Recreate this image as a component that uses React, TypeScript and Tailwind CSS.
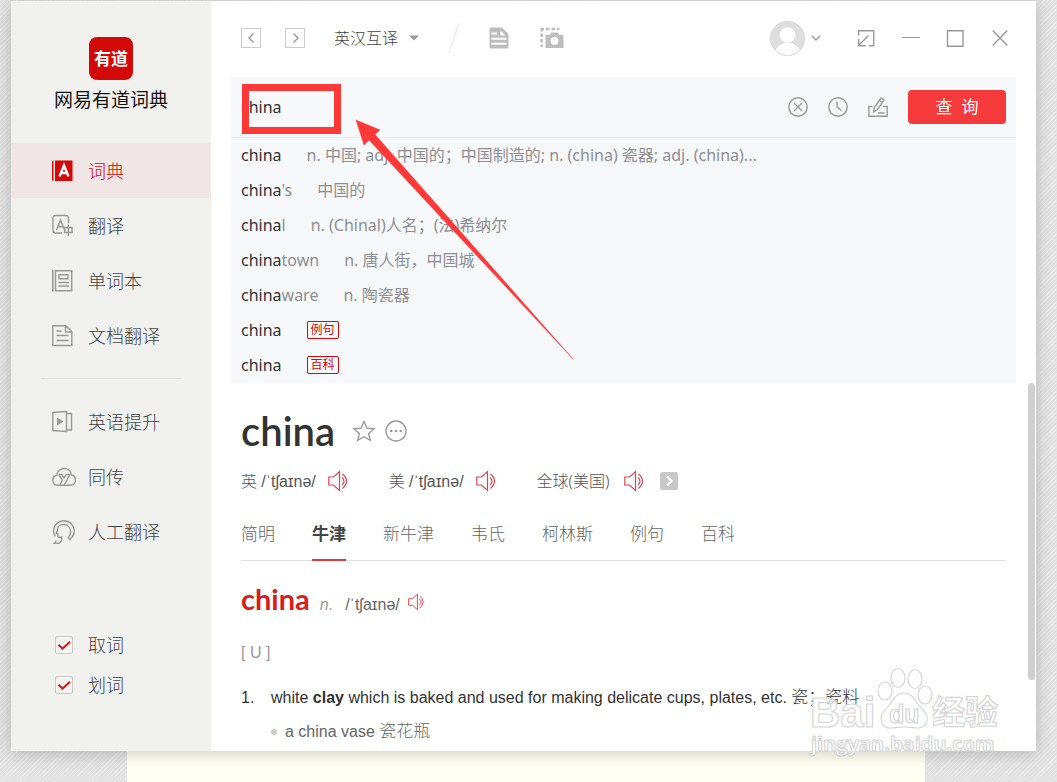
import React, { useState } from "react";

const UI = "font-['Noto_Sans','Noto_Sans_CJK_SC',sans-serif]";
const ARIAL = "font-['Liberation_Sans','Noto_Sans_CJK_SC',sans-serif]";
const ROUND = "font-['Lato','Noto_Sans_CJK_SC',sans-serif]";

type SvgProps = { children: React.ReactNode; w?: number; h?: number; className?: string };

function Svg({ children, w = 24, h = 24, className = "" }: SvgProps) {
  return (
    <svg
      width={w}
      height={h}
      viewBox={`0 0 ${w} ${h}`}
      fill="none"
      stroke="currentColor"
      strokeWidth={1.4}
      aria-hidden="true"
      className={`shrink-0 ${className}`}
    >
      {children}
    </svg>
  );
}

const DictIcon = () => (
  <Svg>
    <path d="M0 3.500q0-2 1.500-2V22Q0 22 0 20.500zM3 1.500h17.500V22H3z" fill="#d30909" stroke="none" />
    <path d="M7.500 17.500 12 6.500l4.500 11M9 14h6" stroke="#fff" strokeWidth="2.4" />
  </Svg>
);
const TranslateIcon = () => (
  <Svg>
    <path d="M16.500 9V4Q16.500 1.500 14 1.500H3.500Q1 1.500 1 4v12.500Q1 19 3.500 19H10" />
    <path d="M4.500 16 8.500 6l4 10M6 12.800h5" />
    <path d="M12.700 13.500h7.300v5h-7.300zM16.300 10.500v11.500" />
  </Svg>
);
const WordbookIcon = () => (
  <Svg>
    <path d="M.8 1v21.500" strokeWidth="1.600" />
    <path d="M3.500 1.700h16.200v20H3.500zM7 5.700h9v4H7zM6.500 13.500h10.500M6.500 17h10.500" />
  </Svg>
);
const DocumentIcon = () => (
  <Svg>
    <path d="M.8 1.800h13l6 6v13.700H.8zM13.500 2v6h6.500M4.500 7h5M4.500 11.500h12M4.500 16.500h12" />
  </Svg>
);
const CourseIcon = () => (
  <Svg>
    <path d="M.8 2.500 14.500 1.500v20L.8 20.500zM14.500 3.500h5v16.500h-5" />
    <path d="M5 7.500v8l6.500-4z" fill="currentColor" stroke="none" />
  </Svg>
);
const CloudIcon = () => (
  <Svg>
    <path d="M5.500 20.300C2.500 20.300.8 18 .8 15.300c0-2.800 2-4.600 4-5C5.200 6 8.500 3.500 12.200 3.500S19 6 19.400 10c2.300.5 4 2.500 4 5.200 0 3-2 5.100-4.800 5.100z" />
    <path d="M6.800 9.500h3l2.200 3.500 2.200-3.500h3.500L12.500 20M6.800 9.500l3.500 5.500-2.300 5" />
  </Svg>
);
const HumanIcon = () => (
  <Svg>
    <path d="M3.200 16.500A10.300 10.300 0 1 1 17.800 19.500L16.300 17.500Q18.800 15 18.600 11.500C18.300 7.500 15.500 4.500 11.500 4.500c-4 0-6 2.700-6 5.500L4.300 13.200l1.500.5v2.300q0 1.500 2 1.200l2-.2v2.500q-1.300 4-4.500 4H1.500q2.500-1 2.800-3" />
  </Svg>
);

function Speaker({ label, size = 22 }: { label: string; size?: number }) {
  return (
    <button type="button" aria-label={label} className="shrink-0 text-[#e0424f]">
      <svg width={size} height={size} viewBox="0 0 22 22" fill="none" stroke="currentColor" strokeWidth="1.2" aria-hidden="true">
        <path d="M.8 7v8h4.700l6 5.500v-19L5.500 7zM14 7.500q4 3.500 0 7.500M14.500 4q8 6.500 0 14.500" />
      </svg>
    </button>
  );
}

const mainNav = [
  { label: "词典", icon: <DictIcon /> },
  { label: "翻译", icon: <TranslateIcon /> },
  { label: "单词本", icon: <WordbookIcon /> },
  { label: "文档翻译", icon: <DocumentIcon /> },
];
const moreNav = [
  { label: "英语提升", icon: <CourseIcon /> },
  { label: "同传", icon: <CloudIcon /> },
  { label: "人工翻译", icon: <HumanIcon /> },
];

function NavItem({ label, icon, active = false }: { label: string; icon: React.ReactNode; active?: boolean }) {
  return (
    <a
      href="#"
      className={`flex h-[55px] items-center gap-3 pl-[41px] text-lg font-light ${
        active ? "bg-[#f0e6e5] text-[#d30909]" : "text-[#444]"
      }`}
    >
      <span className={active ? "" : "text-[#999]"}>{icon}</span>
      {label}
    </a>
  );
}

function Toggle({ label }: { label: string }) {
  return (
    <label className="flex h-10 items-center gap-[15px] text-lg font-light text-[#444]">
      <span className="grid shrink-0">
        <input
          type="checkbox"
          defaultChecked
          className="peer col-start-1 row-start-1 size-[18px] appearance-none rounded-xs border border-[#c8c8c8] bg-[#f4f4f3]"
        />
        <svg
          viewBox="0 0 18 18"
          aria-hidden="true"
          className="pointer-events-none invisible col-start-1 row-start-1 size-[18px] peer-checked:visible"
        >
          <path d="m3.500 8.700 4 4 7.500-7" fill="none" stroke="#dd0f0f" strokeWidth="2" />
        </svg>
      </span>
      {label}
    </label>
  );
}

function Sidebar() {
  return (
    <aside className="w-[200px] shrink-0 bg-[#f1f1ef]">
      <div className="flex h-[142px] flex-col items-center pt-9">
        <div className="flex h-[43px] w-11 items-center justify-center rounded-lg bg-[#d30909] text-[17px] font-bold text-white">
          有道
        </div>
        <div className="mt-2 text-[19px] leading-6 text-[#111]">网易有道词典</div>
      </div>
      <nav>
        {mainNav.map((n, i) => (
          <NavItem key={n.label} {...n} active={i === 0} />
        ))}
        <hr className="mx-[30px] my-[15px] border-[#e2e2e0]" />
        {moreNav.map((n) => (
          <NavItem key={n.label} {...n} />
        ))}
      </nav>
      <div className="mt-[66px] pl-11">
        <Toggle label="取词" />
        <Toggle label="划词" />
      </div>
    </aside>
  );
}

function Toolbar() {
  return (
    <header className="flex h-[76px] items-center pr-7 pb-0.5 pl-[30px] text-[#999]">
      <button type="button" aria-label="后退" className="flex size-5 items-center justify-center border border-[#ccc]">
        <Svg w={18} h={18}><path d="m11.500 4.500-4.500 4.500 4.500 4.500" /></Svg>
      </button>
      <button type="button" aria-label="前进" className="ml-6 flex size-5 items-center justify-center border border-[#ccc]">
        <Svg w={18} h={18}><path d="m7.500 4.500 4.500 4.500-4.500 4.500" /></Svg>
      </button>
      <button type="button" className="ml-[29px] flex items-center gap-2.5 text-base font-light text-[#444]">
        英汉互译
        <Svg w={12} h={6}><path d="M1 .5h10l-5 5z" fill="#999" stroke="none" /></Svg>
      </button>
      <Svg w={12} h={30} className="ml-7 text-[#ececec]"><path d="M11 0 1 30" /></Svg>
      <button type="button" aria-label="文档" className="ml-[29px] text-[#bdbdbd]">
        <Svg w={20} h={22}>
          <path d="M2 .5h11l6.500 6.500v13q0 1.500-1.500 1.500H2Q.5 21.500.5 20V2Q.5.500 2 .5z" fill="currentColor" stroke="none" />
          <path d="M2.500 6.500H8M2.500 11.800h15M2.500 16.800h15" stroke="#fff" strokeWidth="2" />
          <path d="M11.500 3.500v5h5z" fill="#fff" stroke="none" />
        </Svg>
      </button>
      <button type="button" aria-label="截图" className="ml-[31px] text-[#bdbdbd]">
        <Svg w={24} h={22}>
          <path d="M.5 2h19M1.700 1v19" strokeWidth="2.500" strokeDasharray="3.500 2" />
          <path d="M5.500 8h4l2-2.500h6l2 2.500h4v13h-18z" fill="currentColor" stroke="none" />
          <circle cx="14.500" cy="14" r="3.900" fill="#fff" stroke="none" />
        </Svg>
      </button>
      <div className="ml-auto flex items-center">
        <button type="button" aria-label="账户" className="flex items-center gap-1.5">
          <svg width="35" height="35" viewBox="0 0 35 35" aria-hidden="true">
            <circle cx="17.500" cy="17.500" r="17" fill="#dedede" stroke="#d4d4d4" />
            <circle cx="17.500" cy="14" r="7.800" fill="#fff" />
            <path d="M5.500 29.200C8 24.500 12 22 17.500 22s9.500 2.500 12 7.200A17 17 0 0 1 5.500 29.200z" fill="#fff" />
          </svg>
          <Svg w={10} h={6}><path d="m.7.700 4.300 4.300L9.300.7" /></Svg>
        </button>
        <button type="button" aria-label="迷你窗口" className="ml-9">
          <Svg w={18} h={18}><path d="M1.700 6.500V1.700h15v15h-5M11.500 6.500 2 16M1.700 10v6.700h7" /></Svg>
        </button>
        <button type="button" aria-label="最小化" className="ml-[27px]">
          <Svg w={18} h={18}><path d="M0 8.500h18" strokeWidth="1" /></Svg>
        </button>
        <button type="button" aria-label="最大化" className="ml-[26px]">
          <Svg w={18} h={18}><path d="M1.500 1.700h15.500v15.500H1.500z" /></Svg>
        </button>
        <button type="button" aria-label="关闭" className="ml-7">
          <Svg w={16} h={18}><path d="m.7 1.500 14.600 15M15.300 1.500.7 16.500" /></Svg>
        </button>
      </div>
    </header>
  );
}

const suggestions = [
  { rest: "", text: "n. 中国; adj. 中国的；中国制造的; n. (china) 瓷器; adj. (china)..." },
  { rest: "'s", text: "中国的" },
  { rest: "l", text: "n. (Chinal)人名；(法)希纳尔" },
  { rest: "town", text: "n. 唐人街，中国城" },
  { rest: "ware", text: "n. 陶瓷器" },
  { rest: "", tag: "例句" },
  { rest: "", tag: "百科" },
];

function Callout() {
  return (
    <svg
      width="340"
      height="284"
      viewBox="0 0 340 284"
      aria-hidden="true"
      className="pointer-events-none absolute top-1.5 left-2.5"
    >
      <rect x="4.500" y="4.500" width="92" height="43" fill="none" stroke="#fc3838" strokeWidth="7" />
      <path d="m115 37 24 10-5 4.500L332 276 128 57l-5 5z" fill="#fc3838" stroke="#fc3838" strokeWidth=".5" />
    </svg>
  );
}

function SearchPanel() {
  const [query, setQuery] = useState("china");
  return (
    <section className="relative mx-5 bg-[#f7f8fa]">
      <form className="flex h-[61px] items-center border-b border-[#ebecee] px-2.5" onSubmit={(e) => e.preventDefault()}>
        <input
          aria-label="搜索"
          value={query}
          onChange={(e) => setQuery(e.target.value)}
          className="min-w-0 flex-1 bg-transparent text-base text-[#333] outline-none"
        />
        <div className="flex items-center gap-5 text-[#999]">
          <button type="button" aria-label="清除" onClick={() => setQuery("")}>
            <Svg w={20} h={20}><circle cx="10" cy="10" r="9.200" /><path d="m6 6 8 8M14 6l-8 8" /></Svg>
          </button>
          <button type="button" aria-label="历史">
            <Svg w={20} h={20}><circle cx="10" cy="10" r="9.200" /><path d="M9 4.500V10l4.500 3.500" /></Svg>
          </button>
          <button type="button" aria-label="手写">
            <Svg w={20} h={20}>
              <path d="M4.500 9.500H.8v9.700h18.400V9.500H15M10 16h6.500" />
              <path d="m5.500 15 .7-4.200L13 1l3 2-6.800 9.800zM11.500 3.500l3 2" />
            </Svg>
          </button>
          <button type="submit" className="h-[34px] w-[98px] rounded-sm bg-[#f43a3a] text-[17px] text-white">
            查&nbsp; 询
          </button>
        </div>
      </form>
      <ul className="px-2.5">
        {suggestions.map((s, i) => (
          <li key={i} className="flex h-[35px] items-center gap-[25px] pb-0.5 text-base whitespace-nowrap text-[#8c8f94]">
            <span>
              <span className="text-[#333]">china</span>
              {s.rest}
            </span>
            {s.text && <span>{s.text}</span>}
            {s.tag && (
              <span className="flex h-[18px] w-8 items-center justify-center rounded-xs border border-[#d30909] text-xs text-[#d30909]">
                {s.tag}
              </span>
            )}
          </li>
        ))}
      </ul>
      <Callout />
    </section>
  );
}

const tabs = ["简明", "牛津", "新牛津", "韦氏", "柯林斯", "例句", "百科"];
const IPA = "/ˈtʃaɪnə/";

function Entry() {
  return (
    <article className="px-[30px]">
      <div className="flex h-[84px] items-center gap-[18px] pt-3">
        <h1 className={`text-[40px] leading-10 font-semibold text-[#333] ${ROUND}`}>china</h1>
        <div className="flex items-center gap-2.5 text-[#999]">
          <button type="button" aria-label="收藏">
            <Svg w={22} h={22}><path d="m11 1.500 2.900 6.600 7.100.6-5.400 4.700 1.700 7L11 16.700l-6.300 3.700 1.700-7L1 8.700l7.100-.6z" /></Svg>
          </button>
          <button type="button" aria-label="更多">
            <Svg w={22} h={22}>
              <circle cx="11" cy="11" r="10" />
              <path d="M5 11h2.400M9.800 11h2.400M14.600 11H17" strokeWidth="2" />
            </Svg>
          </button>
        </div>
      </div>

      <div className="flex h-7 items-center gap-[39px] whitespace-nowrap text-[#555]">
        <div className="flex items-center gap-3">
          <span><span className="font-light">英</span> <span className={ARIAL}>{IPA}</span></span>
          <Speaker label="英式发音" />
        </div>
        <div className="flex items-center gap-3">
          <span><span className="font-light">美</span> <span className={ARIAL}>{IPA}</span></span>
          <Speaker label="美式发音" />
        </div>
        <div className="flex items-center gap-3.5">
          <span className="font-light">全球(美国)</span>
          <Speaker label="全球发音" />
          <button type="button" aria-label="更多发音" className="flex size-[18px] items-center justify-center rounded-xs bg-[#c8c8c8] text-white">
            <Svg w={18} h={18}><path d="m7 4.500 4.500 4.500L7 13.500" strokeWidth="2.200" /></Svg>
          </button>
        </div>
      </div>

      <div role="tablist" className="mt-[13px] flex gap-[37px] border-b border-[#e2e2e2] text-[17px] font-light text-[#666]">
        {tabs.map((t) => (
          <button
            key={t}
            type="button"
            role="tab"
            aria-selected={t === "牛津"}
            className={`-mb-px flex h-[53px] items-center whitespace-nowrap ${
              t === "牛津" ? "border-b-2 border-[#e03a3e] font-bold text-[#444]" : "border-b-2 border-transparent"
            }`}
          >
            {t}
          </button>
        ))}
      </div>

      <div className={ARIAL}>
        <div className="mt-[18px] flex items-baseline">
          <h2 className={`text-[29px] leading-10 font-bold text-[#d71e1e] ${ROUND}`}>china</h2>
          <i className="ml-2.5 text-base text-[#999]">n.</i>
          <span className="mr-2 ml-3 text-base text-[#666]">{IPA}</span>
          <span className="flex self-center pt-1.5"><Speaker label="发音" size={18} /></span>
        </div>
        <p className="mt-[22px] text-base text-[#999]">[ U ]</p>
        <ol className="mt-4 text-base">
          <li className="flex">
            <span className="w-[30px] shrink-0 leading-[34px] text-[#333]">1.</span>
            <div>
              <p className="leading-[34px] text-[#333]">
                white <b>clay</b> which is baked and used for making delicate cups, plates, etc. <span className="text-[17px] font-light">瓷；瓷料</span>
              </p>
              <p className="flex items-center gap-2 leading-[34px] text-[#666]">
                <span className="size-1.5 rounded-full bg-[#ccc]" />
                <span>a china vase <span className="text-[17px] font-light">瓷花瓶</span></span>
              </p>
            </div>
          </li>
        </ol>
      </div>
    </article>
  );
}

function Watermark() {
  return (
    <svg
      width="200"
      height="100"
      viewBox="0 0 200 100"
      className="pointer-events-none absolute right-[50px] bottom-[18px] font-['Liberation_Sans','Noto_Sans_CJK_SC',sans-serif]"
      fill="#fff"
      fillOpacity=".7"
      stroke="#d6d6d6"
      strokeWidth="1.200"
    >
      <text x="3" y="63" fontSize="42" fontWeight="700">Bai</text>
      <ellipse cx="78" cy="27" rx="7" ry="9" />
      <ellipse cx="91" cy="14" rx="7" ry="9.500" />
      <ellipse cx="108" cy="15" rx="7" ry="9.500" />
      <ellipse cx="118" cy="31" rx="7" ry="9" />
      <path d="M97 29c10 0 12 11 19 17 8 7 4 18-5 18-6 0-9-1-14-1s-8 1-14 1c-9 0-12-11-5-18 7-6 9-17 19-17z" />
      <text x="82" y="59" fontSize="25" fontWeight="700">du</text>
      <text x="125" y="60" fontSize="33" fontWeight="700">经验</text>
      <text x="4" y="87" fontSize="20" fontWeight="700" className="font-['Open_Sans',sans-serif]">jingyan.baidu.com</text>
    </svg>
  );
}

export default function App() {
  return (
    <div
      className={`relative flex min-h-screen flex-col overflow-hidden bg-[repeating-linear-gradient(135deg,#e8e8e8_0_1px,#e2e2e2_1px_3px)] pt-px ${UI}`}
    >
      <div className="relative z-10 mr-[21px] ml-[11px] flex flex-1 bg-white shadow-[0_2px_16px_rgba(0,0,0,0.22)]">
        <Sidebar />
        <main className="relative min-w-0 flex-1">
          <Toolbar />
          <SearchPanel />
          <Entry />
          <div className="absolute top-[382px] right-px h-[297px] w-[7px] rounded-full bg-[#cfcfcf]" />
        </main>
      </div>
      <div className="mr-[132px] ml-[127px] h-[31px] bg-[#fffff3]" />
      <div className="pointer-events-none absolute inset-0 z-20">
        <Watermark />
      </div>
    </div>
  );
}
